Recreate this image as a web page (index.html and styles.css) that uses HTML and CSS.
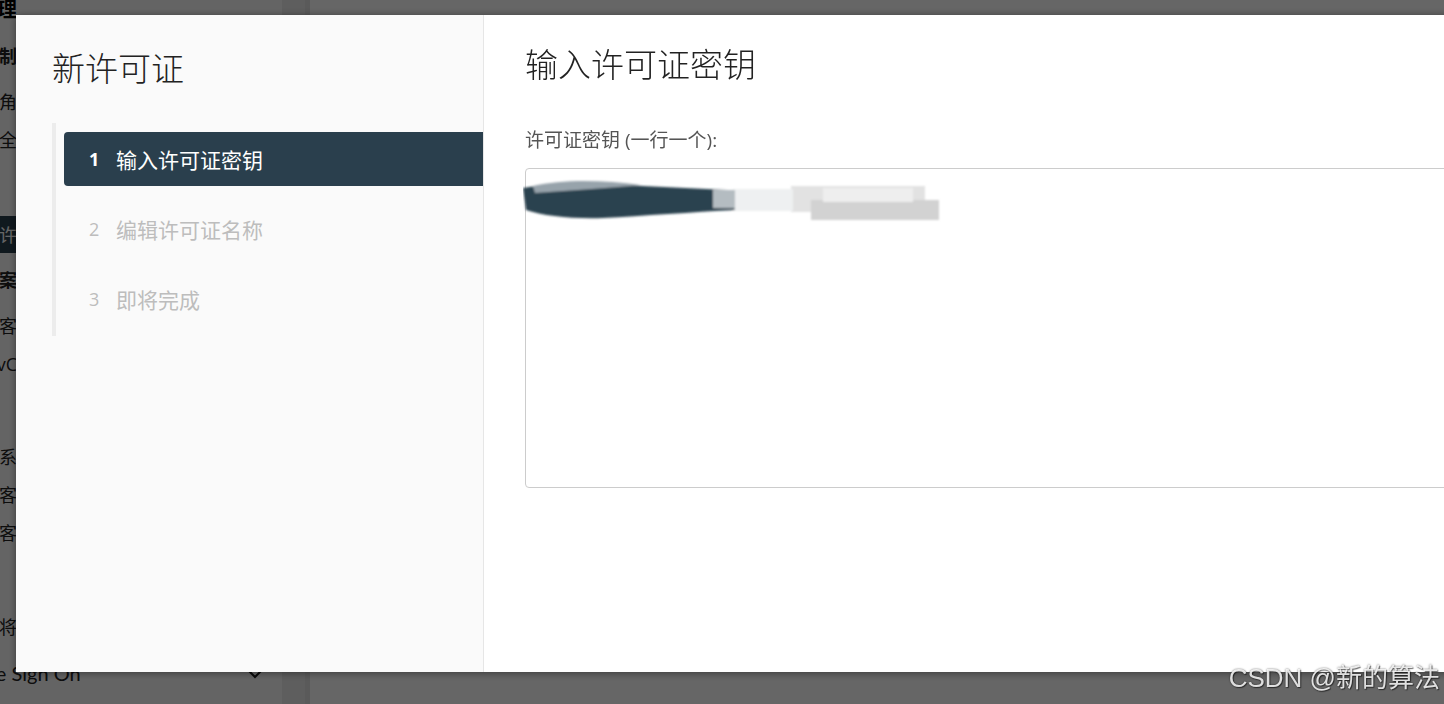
FILE: index.html
```html
<!DOCTYPE html>
<html lang="zh-CN">
<head>
<meta charset="utf-8">
<title>新许可证</title>
<link rel="stylesheet" href="styles.css">
</head>
<body>
<div class="page">
  <aside class="sidebar">
    <div class="sb-item sb-head sb-top"><span class="sb-txt">许可证管理</span></div>
    <div class="sb-item sb-head mt17"><span class="sb-txt">访问控制</span></div>
    <div class="sb-item mt8"><span class="sb-txt">角</span></div>
    <div class="sb-item"><span class="sb-txt">全</span></div>
    <div class="sb-item sb-active mt57"><span class="sb-txt">许</span></div>
    <div class="sb-item sb-head mt8"><span class="sb-txt">方案</span></div>
    <div class="sb-item mt9"><span class="sb-txt">客</span></div>
    <div class="sb-item"><span class="sb-txt">vC</span></div>
    <div class="sb-item mt55"><span class="sb-txt">系</span></div>
    <div class="sb-item"><span class="sb-txt">客</span></div>
    <div class="sb-item"><span class="sb-txt">客</span></div>
    <div class="sb-item mt56"><span class="sb-txt">将</span></div>
    <div class="sb-item sb-sso mt8">
      <span class="sso-txt">Single Sign On</span>
      <svg class="chev" width="16" height="10" viewBox="0 0 16 10"><path d="M2 2 L8 8 L14 2" fill="none" stroke="#1a1a1a" stroke-width="2"/></svg>
    </div>
  </aside>
  <div class="gutter"></div>
  <main class="main"></main>
</div>
<div class="overlay"></div>

<div class="modal">
  <section class="wizard-nav">
    <h1 class="wizard-title">新许可证</h1>
    <ol class="steps">
      <li class="step step-active"><span class="step-num">1</span><span class="step-label">输入许可证密钥</span></li>
      <li class="step"><span class="step-num">2</span><span class="step-label">编辑许可证名称</span></li>
      <li class="step"><span class="step-num">3</span><span class="step-label">即将完成</span></li>
    </ol>
  </section>
  <section class="wizard-body">
    <h2 class="body-title">输入许可证密钥</h2>
    <label class="field-label">许可证密钥 (一行一个):</label>
    <div class="keys-box">
      <svg class="redact" width="430" height="50" viewBox="0 0 430 50">
        <defs>
          <filter id="b" x="-10%" y="-50%" width="120%" height="200%"><feGaussianBlur stdDeviation="1.2"/></filter>
        </defs>
        <g filter="url(#b)">
          <rect x="268" y="12" width="134" height="26" fill="#e2e2e2"/>
          <rect x="288" y="26" width="128" height="20" fill="#d2d2d2"/>
          <rect x="300" y="14" width="90" height="14" fill="#eeeeee"/>
          <rect x="210" y="15" width="60" height="22" fill="#eef0f1"/>
          <path d="M0 14 C30 8 70 8 120 12 L205 16 L212 36 C170 38 120 42 80 44 C50 45 20 42 3 36 Z" fill="#2c4250"/>
          <path d="M10 12 C40 5 80 6 118 11 C90 14 50 16 12 19 Z" fill="#97a3ab"/>
          <rect x="190" y="16" width="22" height="18" fill="#b4bcc1"/>
        </g>
      </svg>
    </div>
  </section>
</div>

<div class="watermark">CSDN @新的算法</div>
</body>
</html>
```

FILE: styles.css
```css
* { box-sizing: border-box; }
html, body { margin: 0; padding: 0; }
body {
  width: 1444px;
  height: 704px;
  overflow: hidden;
  font-family: "Open Sans", "Noto Sans CJK SC", sans-serif;
  background: #ffffff;
  color: #222;
}

/* background page */
.page {
  display: flex;
  height: 704px;
}
.sidebar {
  width: 282px;
  background: #fbfbfb;
  display: flex;
  flex-direction: column;
  font-size: 18px;
  color: #222;
}
.gutter {
  width: 28px;
  background: #ebebeb;
  border-right: 5px solid #e0e0e0;
}
.main { flex: 1; background: #ffffff; }

.sb-item {
  height: 38px;
  line-height: 38px;
  display: flex;
  align-items: center;
}
.sb-top { height: 20px; line-height: 20px; font-size: 20px; color: #000; }
.sb-head { font-weight: 700; }
.sb-txt {
  width: 17px;
  display: flex;
  justify-content: flex-end;
  white-space: nowrap;
}
.sb-active { background: #2a3f4d; color: #fff; height: 37px; }
.mt8 { margin-top: 8px; }
.mt9 { margin-top: 8px; }
.mt17 { margin-top: 17px; }
.mt55 { margin-top: 55px; }
.mt56 { margin-top: 56px; }
.mt57 { margin-top: 57px; }
.sb-sso { justify-content: space-between; padding-right: 19px; font-family: Lato, "Noto Sans CJK SC", sans-serif; font-size: 20px; }
.sso-txt { margin-left: -46px; white-space: nowrap; }
.chev { display: block; margin-top: 2px; }

.overlay {
  position: fixed;
  inset: 0;
  background: rgba(0, 0, 0, 0.6);
}

/* modal */
.modal {
  position: fixed;
  left: 16px;
  top: 15px;
  width: 1520px;
  height: 657px;
  display: flex;
  background: #fff;
  box-shadow: 0 1px 8px rgba(0, 0, 0, 0.45);
}
.wizard-nav {
  width: 468px;
  background: #fafafa;
  border-right: 1px solid #e6e6e6;
  padding: 34px 0 0 36px;
}
.wizard-title {
  margin: 0;
  font-size: 33px;
  line-height: 40px;
  font-weight: 300;
  color: #222;
}
.steps {
  list-style: none;
  margin: 34px 0 0 0;
  padding: 9px 0 10px 8px;
  border-left: 4px solid #ececec;
  display: flex;
  flex-direction: column;
  gap: 16px;
}
.step {
  height: 54px;
  display: flex;
  align-items: center;
  padding-left: 25px;
  font-size: 20px;
  color: #bdbdbd;
  border-radius: 4px 0 0 4px;
}
.step-num {
  width: 27px;
  font-size: 18px;
}
.step-label { font-size: 21px; }
.step-active {
  background: #2a3f4d;
  color: #fff;
}
.step-active .step-num { font-weight: 700; }

.wizard-body {
  flex: 1;
  padding: 28px 0 0 41px;
}
.body-title {
  margin: 0;
  font-size: 33px;
  line-height: 44px;
  font-weight: 300;
  color: #222;
}
.field-label {
  display: block;
  margin-top: 41px;
  font-size: 19px;
  line-height: 24px;
  color: #555;
}
.keys-box {
  margin-top: 16px;
  width: 960px;
  height: 320px;
  border: 1px solid #cccccc;
  border-radius: 4px;
  background: #fff;
  padding: 5px 0 0 0;
}
.redact { display: block; margin-left: -3px; }

.watermark {
  position: fixed;
  right: 4px;
  bottom: 10px;
  font-family: "Liberation Sans", "Noto Sans CJK SC", sans-serif;
  font-size: 26px;
  line-height: 32px;
  color: rgba(255, 255, 255, 0.85);
  text-shadow: 0 0 2px rgba(0, 0, 0, 0.6), 1px 1px 1px rgba(0, 0, 0, 0.5);
}
```
